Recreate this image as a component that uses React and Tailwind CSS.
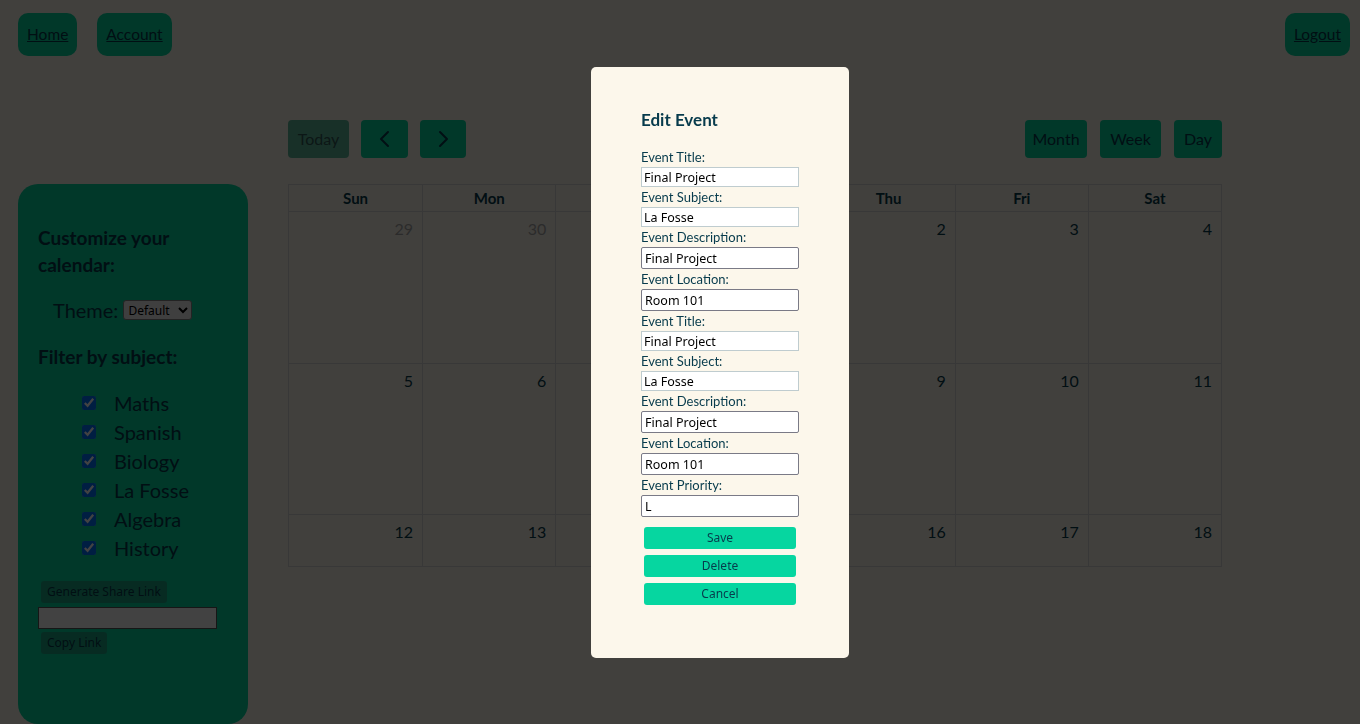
import { useState } from "react";

const subjects = ["Maths", "Spanish", "Biology", "La Fosse", "Algebra", "History"];
const days = ["Sun", "Mon", "Tue", "Wed", "Thu", "Fri", "Sat"];
const weeks = [
  { h: "h-[151px]", cells: [[29, true], [30, true], [31, true], [1], [2], [3], [4]] },
  { h: "h-[151px]", cells: [[5], [6], [7], [8], [9], [10], [11]] },
  { h: "h-[52px]", cells: [[12], [13], [14], [15], [16], [17], [18]] },
];

function Chevron({ left }) {
  return (
    <svg width="14" height="18" viewBox="0 0 14 18" fill="none">
      <path
        d={left ? "M10 2 L3 9 L10 16" : "M4 2 L11 9 L4 16"}
        stroke="#073b4c"
        strokeWidth="2"
        strokeLinecap="round"
        strokeLinejoin="round"
      />
    </svg>
  );
}

function Field({ label, value, light }) {
  return (
    <div>
      <label className="block text-[13px] leading-[20px] text-[#073b4c]">{label}</label>
      <input
        type="text"
        defaultValue={value}
        className={
          light
            ? "block w-[158px] h-[20px] border border-[#bfcccf] bg-white px-[2px] text-[12.5px] text-black font-['Noto_Sans',sans-serif] outline-none"
            : "block w-[158px] h-[22px] border border-[#7a7a86] rounded-[2px] bg-white px-[3px] text-[12.5px] text-black font-['Noto_Sans',sans-serif] outline-none"
        }
      />
    </div>
  );
}

export default function App() {
  const [checked, setChecked] = useState(subjects.map(() => true));

  return (
    <div className="relative h-[724px] overflow-hidden bg-[#fcf7eb] font-['Lato',sans-serif] text-[#073b4c]">
      {/* Nav */}
      <nav className="flex justify-between pl-[18px] pr-[10px] pt-[13px]">
        <div className="flex gap-5">
          <a className="flex h-[43px] items-center rounded-[10px] bg-[#06d6a0] px-[9px] text-[15.5px] underline">Home</a>
          <a className="flex h-[43px] items-center rounded-[10px] bg-[#06d6a0] px-[9px] text-[15.5px] underline">Account</a>
        </div>
        <a className="flex h-[43px] items-center rounded-[10px] bg-[#06d6a0] px-[9px] text-[15.5px] underline">Logout</a>
      </nav>

      <div className="mt-[64px] flex gap-10 px-[18px]">
        {/* Sidebar */}
        <aside className="mt-[64px] h-[540px] w-[230px] shrink-0 rounded-[20px] bg-[#06d6a0] px-5 pt-[40px]">
          <h3 className="text-[19px] font-bold leading-[27px]">Customize your calendar:</h3>
          <div className="mt-[18px] flex h-[28px] items-center gap-[5px] pl-[15px]">
            <span className="text-[20px]">Theme:</span>
            <select className="h-[20px] w-[69px] rounded-[3px] border border-[#888] bg-[#f2f2f2] text-[12px] text-black font-['Noto_Sans',sans-serif]">
              <option>Default</option>
            </select>
          </div>
          <h3 className="mt-[19px] text-[19px] font-bold leading-[27px]">Filter by subject:</h3>
          <ul className="mt-[18px] pl-[44px]">
            {subjects.map((s, i) => (
              <li key={s} className="flex h-[29px] items-center gap-[18px]">
                <input
                  type="checkbox"
                  checked={checked[i]}
                  onChange={() => setChecked(checked.map((c, j) => (j === i ? !c : c)))}
                  className="h-[14px] w-[14px]"
                />
                <span className="text-[20px]">{s}</span>
              </li>
            ))}
          </ul>
          <button className="ml-[3px] mt-[19px] block h-[22px] rounded-[3px] bg-[#1ca884] px-[6px] text-[12px] text-[#073b4c] font-['Noto_Sans',sans-serif]">
            Generate Share Link
          </button>
          <input type="text" className="mt-[4px] block h-[22px] w-[179px] border border-[#555] bg-white" />
          <button className="ml-[3px] mt-[3px] block h-[22px] rounded-[3px] bg-[#1ca884] px-[6px] text-[12px] text-[#073b4c] font-['Noto_Sans',sans-serif]">
            Copy Link
          </button>
        </aside>

        {/* Calendar */}
        <section className="w-[934px]">
          <div className="flex h-[38px] items-center">
            <div className="flex gap-3">
              <button className="h-[38px] w-[61px] rounded-[4px] bg-[#5fb89c] text-base text-[#2f5a55]">Today</button>
              <button className="flex h-[38px] w-[47px] items-center justify-center rounded-[4px] bg-[#06d6a0]">
                <Chevron left />
              </button>
              <button className="flex h-[38px] w-[46px] items-center justify-center rounded-[4px] bg-[#06d6a0]">
                <Chevron />
              </button>
            </div>
            <div className="flex-1 text-center text-[26px] font-semibold">November 2023</div>
            <div className="flex gap-[13px]">
              <button className="h-[38px] w-[62px] rounded-[4px] bg-[#06d6a0] text-base">Month</button>
              <button className="h-[38px] w-[61px] rounded-[4px] bg-[#06d6a0] text-base">Week</button>
              <button className="h-[38px] w-[48px] rounded-[4px] bg-[#06d6a0] text-base">Day</button>
            </div>
          </div>

          <div className="mt-[26px] border border-[#d6d6d6]">
            <div className="grid h-[27px] grid-cols-7 border-b border-[#d6d6d6]">
              {days.map((d, i) => (
                <div
                  key={d}
                  className={`flex items-center justify-center text-[15px] font-bold ${i > 0 ? "border-l border-[#d6d6d6]" : ""}`}
                >
                  {d}
                </div>
              ))}
            </div>
            {weeks.map((w, wi) => (
              <div key={wi} className={`grid grid-cols-7 ${w.h} ${wi > 0 ? "border-t border-[#d6d6d6]" : ""}`}>
                {w.cells.map(([n, off], i) => (
                  <div
                    key={i}
                    className={`pr-[9px] pt-[5px] text-right text-[16px] ${i > 0 ? "border-l border-[#d6d6d6]" : ""} ${off ? "text-[#a8a8a8]" : ""}`}
                  >
                    {n}
                  </div>
                ))}
              </div>
            ))}
          </div>
        </section>
      </div>

      {/* Modal overlay */}
      <div className="fixed inset-0 bg-black/[0.74]">
        <div className="absolute left-[591px] top-[67px] h-[591px] w-[258px] rounded-[5px] bg-[#fcf7eb] pl-[50px] pt-[42px]">
          <h2 className="text-[17px] font-bold leading-[22px] text-[#073b4c]">Edit Event</h2>
          <div className="mt-[16px]">
            <Field label="Event Title:" value="Final Project" light />
            <Field label="Event Subject:" value="La Fosse" light />
            <Field label="Event Description:" value="Final Project" />
            <Field label="Event Location:" value="Room 101" />
            <Field label="Event Title:" value="Final Project" light />
            <Field label="Event Subject:" value="La Fosse" light />
            <Field label="Event Description:" value="Final Project" />
            <Field label="Event Location:" value="Room 101" />
            <Field label="Event Priority:" value="L" />
          </div>
          <div className="mt-[10px] flex flex-col gap-[6px] pl-[3px]">
            {["Save", "Delete", "Cancel"].map((b) => (
              <button
                key={b}
                className="h-[22px] w-[152px] rounded-[3px] bg-[#06d6a0] text-[12px] text-[#073b4c] font-['Noto_Sans',sans-serif]"
              >
                {b}
              </button>
            ))}
          </div>
        </div>
      </div>
    </div>
  );
}
